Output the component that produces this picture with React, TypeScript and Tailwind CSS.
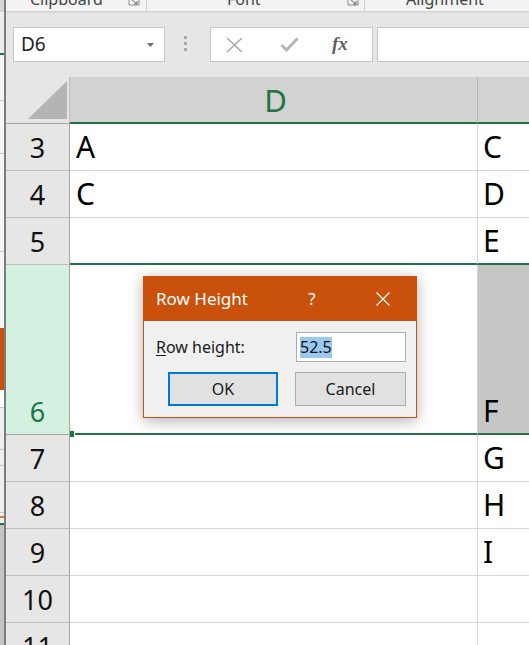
import React from 'react';

const GREEN = '#217346';

type Row = { n: string; d?: string; e?: string };

const topRows: Row[] = [
  { n: '3', d: 'A', e: 'C' },
  { n: '4', d: 'C', e: 'D' },
];
const bottomRows: Row[] = [
  { n: '7', e: 'G' },
  { n: '8', e: 'H' },
  { n: '9', e: 'I' },
  { n: '10' },
  { n: '11' },
];

function Launcher() {
  return (
    <svg width="12" height="6" viewBox="0 0 12 6" className="mt-0">
      <path d="M1 0v5h10V0" fill="none" stroke="#8a8a8a" strokeWidth="1" />
      <path d="M4 0l5 4M9 1v3H6" fill="none" stroke="#6a6a6a" strokeWidth="1" />
    </svg>
  );
}

function LeftStrip() {
  return (
    <div className="flex w-[4px] shrink-0 flex-col">
      <div className="h-[12px] bg-[#d6d6d6]" />
      <div className="h-[41px] bg-[#ededed]" />
      <div className="h-[2px] bg-[#217346]" />
      <div className="h-[45px] bg-[#f6f6f6]" />
      <div className="h-px bg-[#c8c8c8]" />
      <div className="h-[52px] bg-[#f6f6f6]" />
      <div className="h-px bg-[#c8c8c8]" />
      <div className="h-[97px] bg-[#f6f6f6]" />
      <div className="h-px bg-[#c8c8c8]" />
      <div className="h-[76px] bg-[#f6f6f6]" />
      <div className="h-[62px] bg-[#c9510c]" />
      <div className="h-[17px] bg-white" />
      <div className="h-px bg-[#c8c8c8]" />
      <div className="h-[41px] bg-[#eeeeee]" />
      <div className="h-px bg-[#c8c8c8]" />
      <div className="h-[15px] bg-[#eeeeee]" />
      <div className="h-px bg-[#c8c8c8]" />
      <div className="h-[46px] bg-[#eeeeee]" />
      <div className="h-px bg-[#c8c8c8]" />
      <div className="h-[3px] bg-[#eeeeee]" />
      <div className="h-[2px] bg-[#d2773d]" />
      <div className="h-[5px] bg-[#eeeeee]" />
      <div className="h-[2px] bg-[#217346]" />
      <div className="flex-1 bg-[#c4c4c4]" />
    </div>
  );
}

function Ribbon() {
  return (
    <div className="relative z-10 h-[11px] overflow-hidden bg-[#f3f3f3] shadow-[0_1px_2px_rgba(0,0,0,0.12)]">
      <div className="mt-[-9px] flex h-[20px] items-start text-[16px] leading-[16px] text-[#444]">
        <span className="ml-[24px] w-[98px]">Clipboard</span>
        <span className="mt-[9px]">
          <Launcher />
        </span>
        <span className="ml-[6px] h-[20px] w-px bg-[#d0d0d0]" />
        <span className="ml-[80px] w-[120px]">Font</span>
        <span className="mt-[9px]">
          <Launcher />
        </span>
        <span className="ml-[5px] h-[20px] w-px bg-[#d0d0d0]" />
        <span className="ml-[41px]">Alignment</span>
      </div>
    </div>
  );
}

function FormulaBar() {
  return (
    <div className="flex h-[66px] items-start bg-[#e6e6e6] pt-[16px]">
      <div className="ml-[7px] flex h-[35px] w-[152px] items-center justify-between border border-[#c6c6c6] bg-white pl-[7px] pr-[10px]">
        <span className="text-[19px] text-[#222]">D6</span>
        <svg width="7" height="4" viewBox="0 0 7 4">
          <path d="M0 0h7L3.5 4z" fill="#6b6b6b" />
        </svg>
      </div>
      <div className="ml-[19px] mt-[9px] flex w-[4px] flex-col gap-[3px]">
        <div className="h-[3px] w-[3px] bg-[#a8a8a8]" />
        <div className="h-[3px] w-[3px] bg-[#a8a8a8]" />
        <div className="h-[3px] w-[3px] bg-[#a8a8a8]" />
      </div>
      <div className="ml-[22px] flex h-[35px] w-[163px] items-center border border-[#c6c6c6] bg-white">
        <svg width="17" height="16" viewBox="0 0 17 16" className="ml-[15px]">
          <path d="M1 1l15 14M16 1L1 15" stroke="#a9a9a9" strokeWidth="1.6" />
        </svg>
        <svg width="19" height="15" viewBox="0 0 19 15" className="ml-[37px]">
          <path d="M1.5 8l5 5L17.5 1.5" fill="none" stroke="#b5b5b5" strokeWidth="3" />
        </svg>
        <span
          className="ml-[33px] text-[19px] font-bold italic text-[#606060]"
          style={{ fontFamily: '"Liberation Serif", serif' }}
        >
          fx
        </span>
      </div>
      <div className="ml-[4px] h-[35px] flex-1 border border-r-0 border-[#c6c6c6] bg-white" />
    </div>
  );
}

function GridRow({ row }: { row: Row }) {
  return (
    <div className="flex h-[47px] shrink-0">
      <div className="flex w-[64px] shrink-0 items-end justify-center border-r border-b border-r-[#a3a3a3] border-b-[#bdbdbd] bg-[#e6e6e6] pb-[9px] text-[27px] leading-none text-[#111]">
        {row.n}
      </div>
      <div className="flex w-[408px] shrink-0 items-end border-r border-b border-[#d4d4d4] pb-[8px] pl-[6px] text-[30px] leading-none text-black">
        {row.d}
      </div>
      <div className="flex flex-1 items-end border-b border-[#d4d4d4] pb-[8px] pl-[5px] text-[30px] leading-none text-black">
        {row.e}
      </div>
    </div>
  );
}

function Grid() {
  return (
    <div className="flex flex-1 flex-col overflow-hidden">
      <div className="flex h-[47px] shrink-0">
        <div className="relative w-[64px] shrink-0 border-r border-b border-r-[#bdbdbd] border-b-[#a3a3a3] bg-[#e6e6e6]">
          <svg width="64" height="46" viewBox="0 0 64 46" className="absolute left-0 top-0">
            <path d="M22 42L61 4v38z" fill="#b4b4b4" />
          </svg>
        </div>
        <div
          className="flex w-[408px] shrink-0 items-center justify-center border-r border-b-2 border-r-[#b5b5b5] bg-[#d2d2d2] pt-[2px] pl-[4px] text-[31px] leading-none"
          style={{ color: GREEN, borderBottomColor: GREEN }}
        >
          D
        </div>
        <div className="flex-1 border-b-2 bg-[#d2d2d2]" style={{ borderBottomColor: GREEN }} />
      </div>

      {topRows.map((r) => (
        <GridRow key={r.n} row={r} />
      ))}

      <div className="flex h-[47px] shrink-0">
        <div className="flex w-[64px] shrink-0 items-end justify-center border-r border-b border-r-[#a3a3a3] border-b-[#bdbdbd] bg-[#e6e6e6] pb-[9px] text-[27px] leading-none text-[#111]">
          5
        </div>
        <div className="w-[408px] shrink-0 border-r border-b-2 border-r-[#d4d4d4] border-b-[#217346]" />
        <div className="flex flex-1 items-end border-b-2 border-b-[#217346] pb-[7px] pl-[5px] text-[30px] leading-none text-black">
          E
        </div>
      </div>

      <div className="flex h-[170px] shrink-0">
        <div className="flex w-[64px] shrink-0 items-end justify-center border-r border-b border-r-[#a3a3a3] border-b-[#a3a3a3] bg-[#d3f0e0] pb-[9px] text-[27px] leading-none text-[#217346]">
          6
        </div>
        <div className="relative w-[408px] shrink-0 border-r border-b-2 border-r-[#d4d4d4] border-b-[#217346]">
          <div className="absolute bottom-[-4px] left-0 h-[6px] w-[5px] border-r border-white bg-[#217346]" />
        </div>
        <div className="flex flex-1 items-end border-b-2 border-b-[#217346] bg-[#c6c6c6] pb-[7px] pl-[5px] text-[30px] leading-none text-black">
          F
        </div>
      </div>

      {bottomRows.map((r) => (
        <GridRow key={r.n} row={r} />
      ))}
    </div>
  );
}

function RowHeightDialog() {
  return (
    <div className="absolute left-[137px] top-[276px] flex h-[142px] w-[274px] flex-col border border-[#c9510c] bg-[#f0f0f0] shadow-[0_3px_14px_rgba(0,0,0,0.3)]">
      <div className="flex h-[44px] shrink-0 items-center bg-[#c9510c] text-white">
        <span className="ml-[12px] w-[150px] text-[17px]">Row Height</span>
        <span className="w-[12px] text-center text-[17px]">?</span>
        <svg width="14" height="14" viewBox="0 0 14 14" className="ml-[58px]">
          <path d="M0.5 0.5l13 13M13.5 0.5l-13 13" stroke="#fff" strokeWidth="1.2" />
        </svg>
      </div>
      <div className="mt-[11px] flex items-center justify-between pl-[12px] pr-[10px]">
        <span className="text-[16px] text-[#1a1a1a]">
          <span className="underline underline-offset-2">R</span>ow height:
        </span>
        <div className="flex h-[30px] w-[110px] items-center border border-[#adadad] bg-white pl-[3px]">
          <span className="bg-[#99c9ef] text-[16px] leading-[21px] text-[#111]">52.5</span>
        </div>
      </div>
      <div className="mt-[10px] flex pr-[10px]">
        <button className="ml-[24px] flex h-[34px] w-[110px] items-center justify-center border-2 border-[#0078d7] bg-[#e1e1e1] text-[16px] text-[#1a1a1a]">
          OK
        </button>
        <button className="ml-auto flex h-[34px] w-[111px] items-center justify-center border border-[#adadad] bg-[#e1e1e1] text-[16px] text-[#1a1a1a]">
          Cancel
        </button>
      </div>
    </div>
  );
}

export default function App() {
  return (
    <div
      className="flex h-[645px] w-[529px] overflow-hidden bg-white"
      style={{ fontFamily: '"Noto Sans", "Open Sans", sans-serif' }}
    >
      <LeftStrip />
      <div className="w-[2px] shrink-0 bg-[#7d7d7d]" />
      <div className="relative flex min-w-0 flex-1 flex-col">
        <Ribbon />
        <FormulaBar />
        <Grid />
        <RowHeightDialog />
      </div>
    </div>
  );
}
